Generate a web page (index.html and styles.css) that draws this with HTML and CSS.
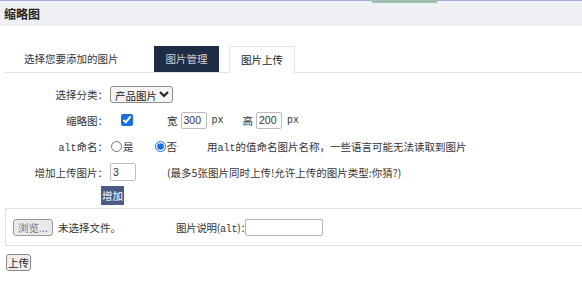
FILE: index.html
```html
<!DOCTYPE html>
<html lang="zh-CN">
<head>
    <meta charset="UTF-8">
    <title>缩略图</title>
    <link rel="stylesheet" href="styles.css">
</head>
<body>
    <!-- 顶部标题 -->
    <div class="panel-head">
        <span class="head-pic"></span>
        <h2>缩略图</h2>
    </div>

    <div class="tabs">
        <span class="tabs-intro">选择您要添加的图片</span>
        <a class="tab tab-dark" href="#">图片管理</a>
        <a class="tab tab-active" href="#">图片上传</a>
    </div>

    <form class="pic-form">
        <div class="row">
            <label class="row-label">选择分类：</label>
            <div class="row-value">
                <select class="cat-select">
                    <option>产品图片</option>
                </select>
            </div>
        </div>

        <div class="row">
            <label class="row-label">缩略图：</label>
            <div class="row-value">
                <input type="checkbox" class="thumb-check" checked>
                <span class="size-label">宽</span>
                <input type="text" class="size-input" value="300">
                <span class="mono">px</span>
                <span class="size-label size-gap">高</span>
                <input type="text" class="size-input" value="200">
                <span class="mono">px</span>
            </div>
        </div>

        <div class="row">
            <label class="row-label"><span class="mono">alt</span>命名：</label>
            <div class="row-value">
                <input type="radio" name="altname" class="radio first-radio"><span>是</span>
                <input type="radio" name="altname" class="radio second-radio" checked><span>否</span>
                <span class="hint">用<span class="mono">alt</span>的值命名图片名称，一些语言可能无法读取到图片</span>
            </div>
        </div>

        <div class="row">
            <label class="row-label">增加上传图片：</label>
            <div class="row-value">
                <input type="text" class="count-input" value="3">
                <span class="count-hint">(最多5张图片同时上传!允许上传的图片类型:你猜?)</span>
            </div>
        </div>

        <div class="add-row">
            <button type="button" class="add-btn">增加</button>
        </div>

        <div class="upload-box">
            <button type="button" class="browse-btn">浏览...</button>
            <span class="file-name">未选择文件。</span>
            <span class="alt-label">图片说明(<span class="mono">alt</span>)：</span>
            <input type="text" class="alt-input">
        </div>

        <button type="button" class="submit-btn">上传</button>
    </form>
</body>
</html>
```

FILE: styles.css
```css
body {
    margin: 0;
    font-family: "Noto Sans CJK SC", "DejaVu Sans", sans-serif;
    font-size: 10.5px;
    color: #333;
    background: #fff;
}

.mono {
    font-family: "Liberation Mono", "Noto Sans CJK SC", monospace;
    font-size: 10px;
}

/* header */
.panel-head {
    position: relative;
    height: 25px;
    background: #eff0f3;
    border-top: 1px solid #a3acdf;
}

.head-pic {
    position: absolute;
    top: -1px;
    left: 372px;
    width: 65px;
    height: 3px;
    background: #9fc0b0;
}

.panel-head h2 {
    margin: 0;
    padding-left: 4px;
    font-size: 12px;
    line-height: 25px;
    font-weight: bold;
    color: #222;
}

/* tabs */
.tabs {
    display: flex;
    align-items: flex-end;
    margin: 20px 0 0 5px;
    height: 26px;
    border-bottom: 1px solid #e4e4e4;
}

.tabs-intro {
    width: 130px;
    padding-left: 19px;
    line-height: 26px;
    color: #333;
}

.tab {
    display: block;
    text-decoration: none;
    text-align: center;
    line-height: 26px;
    height: 26px;
}

.tab-dark {
    width: 65px;
    background: #1f2c45;
    color: #cdd2da;
    margin-right: 10px;
}

.tab-active {
    width: 64px;
    height: 26px;
    background: #fff;
    color: #222;
    border: 1px solid #e2e2e2;
    border-bottom: none;
    margin-bottom: -1px;
}

/* form rows */
.pic-form {
    padding-top: 8px;
}

.row {
    display: flex;
    align-items: center;
    height: 26px;
}

.row-label {
    width: 108px;
    text-align: right;
    margin-right: 2px;
}

.row-value {
    display: flex;
    align-items: center;
}

.cat-select {
    width: 63px;
    height: 17px;
    font-family: inherit;
    font-size: 10.5px;
    padding: 0;
    border: 1px solid #8f8f8f;
    border-radius: 3px;
    background: #f4f4f4;
    color: #222;
}

.thumb-check {
    width: 12px;
    height: 12px;
    margin: 0 34px 0 11px;
    accent-color: #1a6fe0;
}

.size-label {
    margin-right: 3px;
}

.size-gap {
    margin-left: 19px;
}

.size-input,
.count-input {
    width: 26px;
    height: 17px;
    box-sizing: border-box;
    border: 1px solid #bdbdbd;
    border-radius: 2px;
    padding: 0 2px;
    font-family: "Liberation Sans", sans-serif;
    font-size: 10.5px;
    color: #333;
    margin-right: 5px;
}

.radio {
    width: 11px;
    height: 11px;
    margin: 0 1px 0 1px;
    accent-color: #1a6fe0;
}

.second-radio {
    margin-left: 21px;
}

.hint {
    margin-left: 30px;
}

.count-input {
    height: 18px;
}

.count-hint {
    margin-left: 26px;
}

.add-row {
    padding-left: 101px;
    margin-top: 1px;
}

.add-btn {
    display: block;
    width: 23px;
    height: 19px;
    padding: 0;
    border: none;
    background: #4a5c84;
    color: #fff;
    font-family: inherit;
    font-size: 10.5px;
}

/* upload box */
.upload-box {
    display: flex;
    align-items: center;
    margin: 3px -10px 0 5px;
    height: 36px;
    border: 1px solid #e0e0e0;
    padding-left: 7px;
}

.browse-btn {
    width: 40px;
    height: 17px;
    padding: 0;
    border: 1px solid #999;
    border-radius: 3px;
    background: #e9e9e9;
    color: #7a7a7a;
    font-family: inherit;
    font-size: 10.5px;
}

.file-name {
    margin-left: 5px;
    width: 118px;
}

.alt-label {
    letter-spacing: -0.3px;
}

.alt-input {
    width: 78px;
    height: 17px;
    box-sizing: border-box;
    border: 1px solid #b5b5b5;
    border-radius: 2px;
    margin-left: -6px;
}

.submit-btn {
    display: block;
    margin: 8px 0 0 6px;
    width: 25px;
    height: 17px;
    padding: 0;
    border: 1px solid #888;
    border-radius: 3px;
    background: #efefef;
    color: #222;
    font-family: inherit;
    font-size: 10.5px;
}
```
